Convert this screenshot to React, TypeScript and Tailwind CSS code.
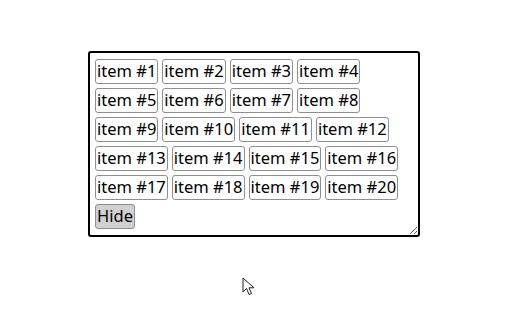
import React from 'react';

const items = Array.from({ length: 20 }, (_, i) => `item #${i + 1}`);

const App: React.FC = () => {
  return (
    <div className="relative w-[508px] h-[309px] bg-white flex flex-col items-center pt-[51px]" style={{ fontFamily: '"Noto Sans", "Liberation Sans", sans-serif' }}>
      <div className="w-[332px] h-[186px] border-2 border-black rounded-[3px] pl-[5px] pr-[5px] pt-[6px] resize overflow-auto">
        <div className="flex flex-wrap gap-x-[4px] gap-y-[4px]">
          {items.map((label) => (
            <button
              key={label}
              className="h-[25px] px-[1px] border border-[#8f8f8f] rounded-[3px] bg-white text-[16.5px] leading-none text-black"
            >
              {label}
            </button>
          ))}
          <button className="h-[25px] px-[1px] border border-[#8f8f8f] rounded-[3px] bg-[#d0d0d0] text-[16.5px] leading-none text-black">
            Hide
          </button>
        </div>
      </div>
      <svg className="absolute left-[242px] top-[277px]" width="14" height="20" viewBox="0 0 14 20">
        <path d="M1 1 L1 15 L4.5 11.5 L7 17.5 L9.5 16.5 L7 10.8 L12 10.8 Z" fill="white" stroke="#222" strokeWidth="1" strokeLinejoin="round" />
      </svg>
    </div>
  );
};

export default App;
